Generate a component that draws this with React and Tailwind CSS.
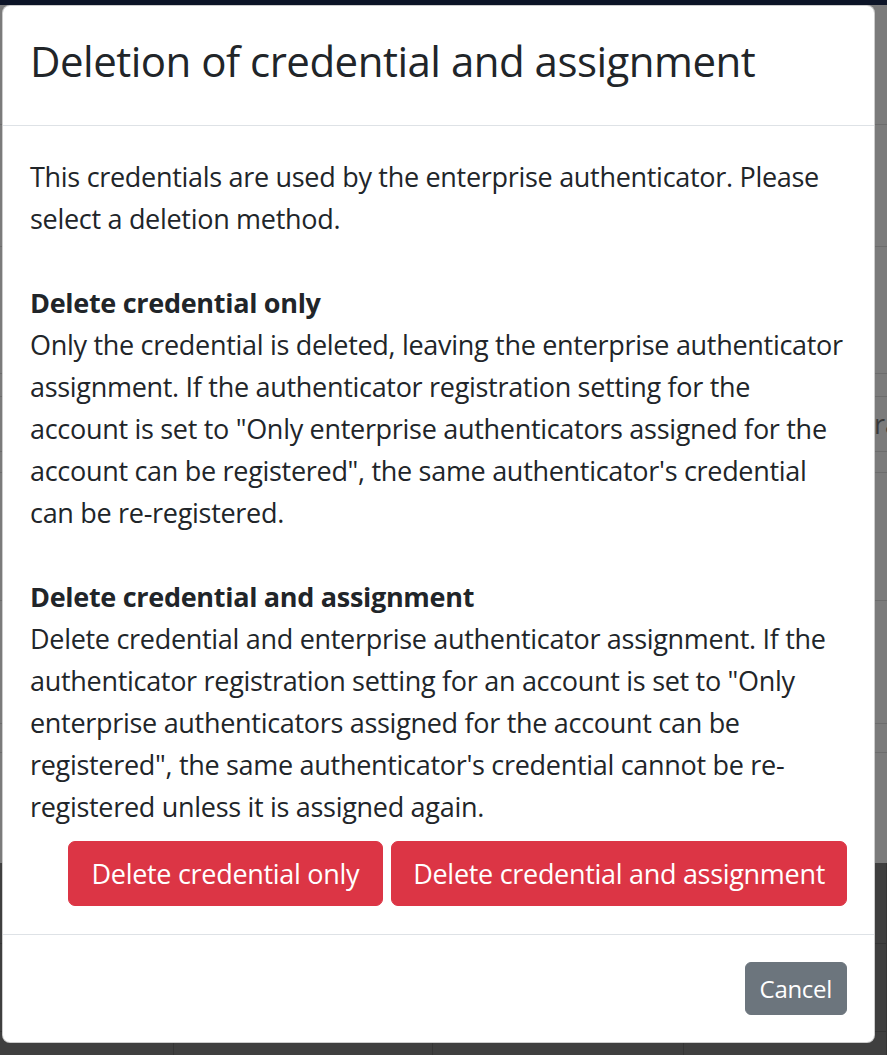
import React from 'react';

const font = { fontFamily: '"Open Sans", "Noto Sans", sans-serif' };

const intro = [
  'This credentials are used by the enterprise authenticator. Please',
  'select a deletion method.',
];

const sections = [
  {
    title: 'Delete credential only',
    lines: [
      'Only the credential is deleted, leaving the enterprise authenticator',
      'assignment. If the authenticator registration setting for the',
      'account is set to "Only enterprise authenticators assigned for the',
      'account can be registered", the same authenticator\'s credential',
      'can be re-registered.',
    ],
  },
  {
    title: 'Delete credential and assignment',
    lines: [
      'Delete credential and enterprise authenticator assignment. If the',
      'authenticator registration setting for an account is set to "Only',
      'enterprise authenticators assigned for the account can be',
      'registered", the same authenticator\'s credential cannot be re-',
      'registered unless it is assigned again.',
    ],
  },
];

function Lines({ lines }) {
  return lines.map((l) => (
    <div key={l} className="whitespace-nowrap">
      {l}
    </div>
  ));
}

function Backdrop() {
  return (
    <div className="h-[1055px] overflow-hidden">
      <div className="h-[5px] bg-[#0c1427]" />
      <div className="bg-[#7b7b7b] text-[#3a3a3a] text-[27px]" style={font}>
        <div className="h-[120px] border-b border-[#6c6c6c]" />
        <div className="h-[122px] border-b border-[#6c6c6c]" />
        <div className="h-[127px] border-b border-[#6c6c6c]" />
        <div className="h-[23px] border-b border-[#6c6c6c]" />
        <div className="h-[55px] border-b border-[#6c6c6c] flex items-center pl-[874px] whitespace-nowrap">
          ra
        </div>
        <div className="h-[21px] border-b border-[#6c6c6c]" />
        <div className="h-[128px] border-b border-[#6c6c6c]" />
        <div className="h-[123px] border-b border-[#6c6c6c]" />
        <div className="h-[29px] border-b border-[#6c6c6c]" />
        <div className="h-[110px]" />
      </div>
      <div className="h-[192px] bg-[#3f3f3f] grid grid-cols-[174px_259px_251px_1fr]">
        {[0, 1, 2, 3].map((i) => (
          <div key={i} className="border-r border-[#353535] flex flex-col">
            <div className="h-[81px] border-b border-[#353535]" />
            <div className="h-[88px] border-b border-[#353535] flex items-center text-[27px] text-[#5a5a5a] -ml-[12px]" style={font}>
              {i === 0 ? 's' : ''}
            </div>
          </div>
        ))}
      </div>
    </div>
  );
}

export default function App() {
  return (
    <div className="relative w-[887px] h-[1055px] overflow-hidden">
      <Backdrop />
      <div
        className="absolute left-[2px] top-[5px] w-[873px] h-[1038px] bg-white rounded-[8px] border border-black/20 flex flex-col text-[#212529]"
        style={font}
      >
        <div className="h-[120px] shrink-0 border-b border-[#dee2e6] px-[27px] flex items-center">
          <h4 className="text-[42px] leading-[50px] font-medium tracking-[-0.5px] whitespace-nowrap -mt-[10px]">
            Deletion of credential and assignment
          </h4>
        </div>
        <div className="px-[27px] pt-[30px] pb-[28px] text-[27px] leading-[42px] tracking-[-0.3px] border-b border-[#dee2e6]">
          <Lines lines={intro} />
          <div className="h-[42px]" />
          {sections.map((s, i) => (
            <div key={s.title}>
              <div className="font-bold whitespace-nowrap">{s.title}</div>
              <Lines lines={s.lines} />
              {i === 0 && <div className="h-[42px]" />}
            </div>
          ))}
          <div className="mt-[13px] flex justify-end gap-[8px]">
            <button className="h-[65px] px-[23px] rounded-[7px] bg-[#dc3545] border border-[#dc3545] text-white text-[27px] leading-[42px] tracking-[-0.3px] whitespace-nowrap">
              Delete credential only
            </button>
            <button className="h-[65px] px-[21px] rounded-[7px] bg-[#dc3545] border border-[#dc3545] text-white text-[27px] leading-[42px] tracking-[-0.3px] whitespace-nowrap">
              Delete credential and assignment
            </button>
          </div>
        </div>
        <div className="flex-1 px-[27px] flex items-center justify-end">
          <button className="h-[53px] px-[14px] rounded-[6px] bg-[#6c757d] border border-[#6c757d] text-white text-[24px] leading-[37px] tracking-[-0.3px]">
            Cancel
          </button>
        </div>
      </div>
    </div>
  );
}
